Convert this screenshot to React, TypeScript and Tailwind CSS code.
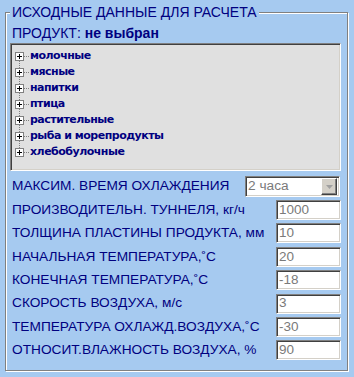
const categories = [
  "молочные",
  "мясные",
  "напитки",
  "птица",
  "растительные",
  "рыба и морепродукты",
  "хлебобулочные",
];

const params = [
  { label: "ПРОИЗВОДИТЕЛЬН. ТУННЕЛЯ, кг/ч", value: "1000" },
  { label: "ТОЛЩИНА ПЛАСТИНЫ ПРОДУКТА, мм", value: "10" },
  { label: "НАЧАЛЬНАЯ ТЕМПЕРАТУРА,˚С", value: "20" },
  { label: "КОНЕЧНАЯ ТЕМПЕРАТУРА,˚С", value: "-18" },
  { label: "СКОРОСТЬ ВОЗДУХА, м/с", value: "3" },
  { label: "ТЕМПЕРАТУРА ОХЛАЖД.ВОЗДУХА,˚С", value: "-30" },
  { label: "ОТНОСИТ.ВЛАЖНОСТЬ ВОЗДУХА, %", value: "90" },
];

function TreeItem({ name }: { name: string }) {
  return (
    <div className="flex items-center h-[16px]">
      <span className="relative z-10 flex items-center justify-center w-[9px] h-[9px] border border-[#808080] bg-white">
        <span className="absolute w-[5px] h-[1px] bg-black" />
        <span className="absolute w-[1px] h-[5px] bg-black" />
      </span>
      <span className="w-[5px] border-t border-dotted border-[#808080]" />
      <span className="ml-[1px] font-bold text-[11px] leading-[16px] text-[#000080] font-['DejaVu_Sans',sans-serif] tracking-[-0.5px]">
        {name}
      </span>
    </div>
  );
}

function Field({ value }: { value: string }) {
  return (
    <div className="w-[65px] h-[20px] bg-white border-t border-l border-[#808080] border-r border-b border-r-white border-b-white shadow-[inset_1px_1px_0_#404040,inset_-1px_-1px_0_#d4d0c8] flex items-center pl-[2px] text-[13.5px] text-[#7a7a7a]">
      {value}
    </div>
  );
}

export default function App() {
  return (
    <div className="w-[354px] h-[377px] bg-[#a6caf0] pt-[5px] font-['Liberation_Sans',Arial,sans-serif] text-[#000080]">
      <fieldset className="ml-[5px] w-[343px] h-[366px] border border-[#808080] shadow-[1px_1px_0_white,inset_1px_1px_0_white] pl-[4px] pr-[6px]">
        <legend className="px-[2px] bg-[#a6caf0] text-[14px] leading-[15px]">
          ИСХОДНЫЕ ДАННЫЕ ДЛЯ РАСЧЕТА
        </legend>

        <div className="mt-[5px] pl-[2px] text-[14px] leading-[16px]">
          ПРОДУКТ: <b>не выбран</b>
        </div>

        <div className="mt-[2px] h-[128px] bg-[#e0e0e0] border-t border-l border-[#808080] border-r border-b border-r-white border-b-white shadow-[inset_1px_1px_0_#404040,inset_-1px_-1px_0_#d4d0c8] pt-[4px] pl-[4px]">
          <div className="relative">
            <span className="absolute left-[4px] top-[8px] h-[96px] border-l border-dotted border-[#808080]" />
            {categories.map((c) => (
              <TreeItem key={c} name={c} />
            ))}
          </div>
        </div>

        <div className="mt-[5px] flex items-center justify-between h-[21px] pl-[2px] text-[13.7px]">
          <span>МАКСИМ. ВРЕМЯ ОХЛАЖДЕНИЯ</span>
          <div className="mr-[1px] w-[95px] h-[21px] bg-white border-t border-l border-[#808080] border-r border-b border-r-white border-b-white shadow-[inset_1px_1px_0_#404040,inset_-1px_-1px_0_#d4d0c8] flex items-center">
            <span className="flex-1 pl-[2px] text-[#7a7a7a]">2 часа</span>
            <span className="mr-[2px] w-[16px] h-[17px] bg-[#d4d0c8] border-t border-l border-white border-r border-b border-r-[#404040] border-b-[#404040] shadow-[inset_-1px_-1px_0_#808080] flex items-center justify-center">
              <svg width="7" height="4" viewBox="0 0 7 4">
                <path d="M0 0h7L3.5 4z" fill="#a0a0a0" />
              </svg>
            </span>
          </div>
        </div>

        <div className="mt-[3px] flex flex-col gap-[3.4px]">
          {params.map((p) => (
            <div key={p.label} className="flex items-center justify-between h-[20px] pl-[2px] text-[13.7px]">
              <span>{p.label}</span>
              <Field value={p.value} />
            </div>
          ))}
        </div>
      </fieldset>
    </div>
  );
}
